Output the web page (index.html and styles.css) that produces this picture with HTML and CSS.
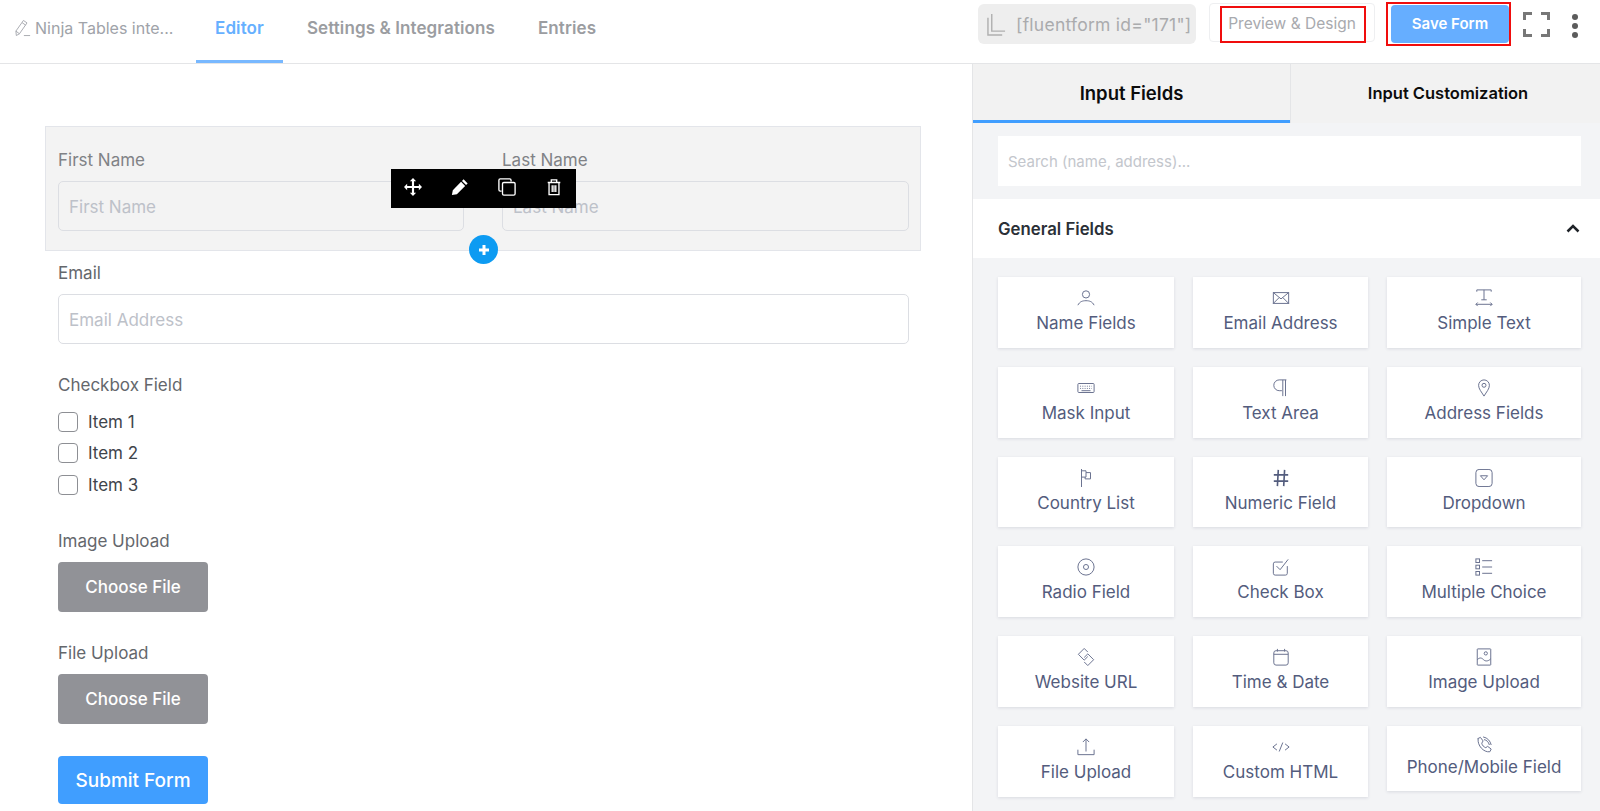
FILE: index.html
```html
<!DOCTYPE html>
<html lang="en">
<head>
<meta charset="utf-8">
<title>Fluent Forms Editor</title>
<link rel="stylesheet" href="styles.css">
</head>
<body>
<div class="app">
  <header class="topbar">
    <div class="title">
      <svg class="title-icon" viewBox="0 0 18 20"><path d="M1.500 18.500L1 13.500 9.500 1.500l4 2.800L5 16.500zM1 13.500l4 3M8 4l4 2.800M10 18.500h7"/></svg>
      <span>Ninja Tables inte...</span>
    </div>
    <nav class="nav">
      <a class="nav-item active">Editor</a>
      <a class="nav-item">Settings &amp; Integrations</a>
      <a class="nav-item">Entries</a>
    </nav>
    <div class="actions">
      <div class="shortcode">
        <svg class="copy-icon" viewBox="0 0 20 24"><path d="M1 5v18h15M5 1v18h14"/></svg>
        <span>[fluentform id="171"]</span>
      </div>
      <button class="btn-preview">Preview &amp; Design<span class="mark mark-preview"></span></button>
      <button class="btn-save">Save Form<span class="mark mark-save"></span></button>
      <svg class="full-icon" viewBox="0 0 27 25"><path d="M1.500 8V1.500H9M18 1.500h7.500V8M1.500 17v6.500H9M18 23.500h7.500V17"/></svg>
      <div class="dots"><i></i><i></i><i></i></div>
    </div>
  </header>

  <div class="main">
    <section class="canvas">
      <div class="row-selected">
        <div class="field half">
          <label class="lbl">First Name</label>
          <input class="inp" placeholder="First Name">
        </div>
        <div class="field half">
          <label class="lbl">Last Name</label>
          <input class="inp" placeholder="Last Name">
        </div>
        <div class="toolbar">
          <svg viewBox="0 0 20 20"><path class="solid" d="M10 0l3.500 3.500h-2.300v5.300h5.300V6.500L20 10l-3.500 3.500v-2.300h-5.300v5.300h2.300L10 20l-3.500-3.500h2.300v-5.300H3.500v2.300L0 10l3.500-3.500v2.300h5.300V3.500H6.500z"/></svg>
          <svg viewBox="0 0 20 20"><path class="solid" d="M14 1.500l4.500 4.500-1.800 1.800-4.500-4.500zM11.200 4.300l4.500 4.500L6.500 18 1 19l1-5.500z"/></svg>
          <svg viewBox="0 0 20 20"><path class="line" d="M4 14.500H2.500a1.500 1.500 0 0 1-1.500-1.500V2.500A1.500 1.500 0 0 1 2.500 1H13a1.500 1.500 0 0 1 1.500 1.500V4"/><rect class="line" x="5" y="5" width="14" height="14" rx="1.500"/></svg>
          <svg viewBox="0 0 20 20"><path class="line" d="M3 5h14M7 5V2h6v3M4.500 5v13.500h11V5M8 8v7.500M10 8v7.500M12 8v7.500"/></svg>
        </div>
        <div class="plus"><svg viewBox="0 0 12 12"><path d="M6 1v10M1 6h10"/></svg></div>
      </div>

      <div class="block first">
        <label class="lbl">Email</label>
        <input class="inp white" placeholder="Email Address">
      </div>

      <div class="block gap-check">
        <label class="lbl">Checkbox Field</label>
        <div class="checks">
          <div class="check"><span class="box"></span>Item 1</div>
          <div class="check"><span class="box"></span>Item 2</div>
          <div class="check"><span class="box"></span>Item 3</div>
        </div>
      </div>

      <div class="block gap-upload">
        <label class="lbl">Image Upload</label>
        <button class="btn-file">Choose File</button>
      </div>

      <div class="block gap-upload2">
        <label class="lbl">File Upload</label>
        <button class="btn-file">Choose File</button>
      </div>

      <div class="block gap-submit">
        <button class="btn-submit">Submit Form</button>
      </div>
    </section>

    <aside class="side">
      <div class="tabs">
        <div class="tab current">Input Fields</div>
        <div class="tab other">Input Customization</div>
      </div>
      <div class="search-wrap"><input class="search" placeholder="Search (name, address)..."></div>
      <div class="group-head">
        <span>General Fields</span>
        <svg class="chev" viewBox="0 0 14 9"><path d="M1.500 7.500L7 2l5.500 5.500"/></svg>
      </div>
      <div class="grid">
        <div class="card"><svg class="ico" viewBox="0 0 20 20"><circle cx="10" cy="6" r="4"/><path d="M1 18c2-4 5-5 9-5s7 1 9 5"/></svg><span>Name Fields</span></div>
        <div class="card"><svg class="ico" viewBox="0 0 20 20"><rect x="1.500" y="4" width="17" height="12"/><path d="M1.500 4L10 11l8.500-7M1.500 16L8 9.500M18.500 16L12 9.500"/></svg><span>Email Address</span></div>
        <div class="card"><svg class="ico" viewBox="0 0 20 20"><path d="M2 3V1h16v2M10 1v11M7 12h6M1 17h18M3 15l-2 2 2 2M17 15l2 2-2 2"/></svg><span>Simple Text</span></div>

        <div class="card"><svg class="ico" viewBox="0 0 20 20"><rect x="1" y="5" width="18" height="10" rx="1"/><path class="dash" d="M3.500 8h13M3.500 10.500h13"/><path d="M5 13h10"/></svg><span>Mask Input</span></div>
        <div class="card"><svg class="ico" viewBox="0 0 20 20"><path d="M16 1H8a6 6 0 0 0 0 12h3M12 1v18M15 1v18"/></svg><span>Text Area</span></div>
        <div class="card"><svg class="ico" viewBox="0 0 20 20"><path d="M10 19C7 14 4 11 4 7a6 6 0 0 1 12 0c0 4-3 7-6 12z"/><circle cx="10" cy="7" r="2.200"/></svg><span>Address Fields</span></div>

        <div class="card"><svg class="ico" viewBox="0 0 20 20"><path d="M5 0v20M5 2h5v2h5v7H9V9H5M10 4v5h-1"/></svg><span>Country List</span></div>
        <div class="card"><svg class="ico heavy" viewBox="0 0 20 20"><path d="M7 1L6 19M14 1l-1 18M2 6.500h16M2 13.500h16"/></svg><span>Numeric Field</span></div>
        <div class="card"><svg class="ico" viewBox="0 0 20 20"><rect x="1" y="0.500" width="18" height="19" rx="3.500"/><path d="M6 7.500h8L10 12z"/></svg><span>Dropdown</span></div>

        <div class="card"><svg class="ico" viewBox="0 0 20 20"><circle cx="10" cy="10" r="9"/><circle cx="10" cy="10" r="2.800"/></svg><span>Radio Field</span></div>
        <div class="card"><svg class="ico" viewBox="0 0 20 20"><path d="M17 9v8a2 2 0 0 1-2 2H3.500a2 2 0 0 1-2-2V6.500a2 2 0 0 1 2-2H12M5 9l4 4 9-11.500"/></svg><span>Check Box</span></div>
        <div class="card"><svg class="ico" viewBox="0 0 20 20"><rect x="1" y="1" width="4" height="4"/><rect x="1" y="8" width="4" height="4"/><rect x="1" y="15" width="4" height="4"/><path d="M8 3h11M8 10h11M8 17h11"/></svg><span>Multiple Choice</span></div>

        <div class="card"><svg class="ico" viewBox="0 0 20 20"><path d="M12 4.500L8 0.500 1.500 7l6.500 6.500 4-4M8 15.500l4 4L18.500 13 12 6.500l-4 4"/></svg><span>Website URL</span></div>
        <div class="card"><svg class="ico" viewBox="0 0 20 20"><rect x="2" y="3" width="16" height="16" rx="2.500"/><path d="M2 7h16M6 1v3M14 1v3"/></svg><span>Time &amp; Date</span></div>
        <div class="card"><svg class="ico" viewBox="0 0 20 20"><rect x="2.500" y="1" width="15" height="18" rx="0.500"/><circle cx="12" cy="6" r="1.800"/><path d="M2.500 13c3-3 5-2 7 0s5 2 8-1"/></svg><span>Image Upload</span></div>

        <div class="card"><svg class="ico" viewBox="0 0 20 20"><path d="M1 13v5.500h18V13M10 15V1M6.500 4.500L10 1l3.500 3.500"/></svg><span>File Upload</span></div>
        <div class="card"><svg class="ico" viewBox="0 0 20 20"><path d="M5.500 6.500L1 10l4.500 3.500M14.500 6.500L19 10l-4.500 3.500M12 5L8 15"/></svg><span>Custom HTML</span></div>
        <div class="card short"><svg class="ico" viewBox="0 0 20 20"><path d="M3 3l3-1.500 3 4L7.500 8c.500 2.500 2 4 4.500 5l2-1.500 4 3-1.500 3c-7 1-14-7-13-14.500zM9 1c5 1 8 4.500 9 9M10 4c3 .5 5 2.500 6 6"/></svg><span>Phone/Mobile Field</span></div>
      </div>
    </aside>
  </div>
</div>
</body>
</html>
```

FILE: styles.css
```css
* { box-sizing: border-box; }
html, body { margin: 0; height: 100%; overflow: hidden; background: #fff; }
body { font-family: Inter, "Noto Sans", sans-serif; color: #4b5563; }
button, input { font-family: inherit; }

.app { display: flex; flex-direction: column; height: 811px; }

/* Top bar */
.topbar {
  height: 64px;
  flex: none;
  display: flex;
  border-bottom: 1px solid #e4e5e7;
  position: relative;
}
.title {
  display: flex;
  align-items: center;
  gap: 4px;
  padding: 0 0 8px 15px;
  width: 196px;
  font-size: 16px;
  color: #a0a3a9;
  white-space: nowrap;
}
.title-icon { width: 16px; height: 18px; flex: none; fill: none; stroke: #a0a3a9; stroke-width: 1; }
.nav { display: flex; }
.nav-item {
  height: 63px;
  padding: 0 19px;
  margin-right: 5px;
  display: flex;
  align-items: center;
  padding-bottom: 7px;
  font-size: 17px;
  letter-spacing: 0.1px;
  font-weight: 600;
  color: #9b9da1;
}
.nav-item.active {
  color: #66b0ff;
  box-shadow: inset 0 -3px 0 #78b8ff;
}
.actions {
  margin-left: auto;
  display: flex;
  align-items: flex-start;
  height: 63px;
}
.shortcode {
  margin: 4px 13px 0 0;
  width: 218px;
  height: 40px;
  display: flex;
  align-items: center;
  gap: 10px;
  padding: 1px 0 0 9px;
  background: #eeeeee;
  border-radius: 6px;
  font-size: 17.500px;
  letter-spacing: 0.25px;
  color: #aaabad;
  white-space: nowrap;
}
.copy-icon { width: 19px; height: 23px; flex: none; fill: none; stroke: #b0b0b0; stroke-width: 1.500; }
.btn-preview {
  position: relative;
  margin-top: 3px;
  width: 166px;
  height: 39px;
  background: #fff;
  border: 1px solid #eeeff1;
  border-radius: 4px;
  font-size: 15.500px;
  color: #a8aaae;
  padding: 1px 0 0;
  white-space: nowrap;
}
.btn-save {
  position: relative;
  margin: 5px 0 0 16px;
  width: 118px;
  height: 38px;
  padding: 0 0 2px;
  background: #66aeff;
  border: 0;
  border-radius: 4px;
  color: #fff;
  font-size: 15px;
  font-weight: 600;
}
.mark { position: absolute; border: 2px solid #f00d0d; pointer-events: none; }
.mark-preview { left: 10px; top: 2px; width: 146px; height: 37px; }
.mark-save { left: -5px; top: -3px; width: 125px; height: 44px; }
.full-icon {
  margin: 12px 0 0 14px;
  width: 27px;
  height: 25px;
  flex: none;
  fill: none;
  stroke: #777;
  stroke-width: 3;
}
.dots {
  margin: 14px 22px 0 22px;
  width: 6px;
  display: flex;
  flex-direction: column;
  gap: 3px;
}
.dots i { display: block; width: 6px; height: 6px; border-radius: 50%; background: #5c5c5c; }

/* Main */
.main { flex: 1; display: flex; min-height: 0; }

/* Form canvas */
.canvas { width: 972px; flex: none; padding: 62px 0 0 45px; }
.row-selected {
  position: relative;
  width: 876px;
  height: 125px;
  padding: 22px 11px 0 12px;
  display: flex;
  gap: 38px;
  background: #f3f3f3;
  border: 1px solid #e3e5ea;
}
.half { flex: 1; }
.half:first-child { flex: none; width: 406px; }
.lbl {
  display: block;
  height: 22px;
  line-height: 22px;
  margin-bottom: 10px;
  font-size: 17px;
  color: #64676c;
}
.row-selected .lbl { color: #808286; margin-bottom: 10px; }
.inp {
  display: block;
  width: 100%;
  height: 50px;
  padding: 2px 10px 0;
  background: #f3f3f3;
  border: 1px solid #dcdee3;
  border-radius: 5px;
  font-size: 17px;
}
.inp.white { background: #fff; }
.inp::placeholder { color: #bdc1c9; opacity: 1; }
.toolbar {
  position: absolute;
  left: 345px;
  top: 42px;
  width: 185px;
  height: 39px;
  background: #000;
  display: flex;
  align-items: center;
  gap: 29px;
  padding: 0 0 3px 13px;
}
.toolbar svg { width: 18px; height: 18px; flex: none; }
.toolbar .solid { fill: #fff; }
.toolbar .line { fill: none; stroke: #fff; stroke-width: 1.500; }
.plus {
  position: absolute;
  left: 423px;
  top: 108px;
  width: 29px;
  height: 29px;
  border-radius: 50%;
  background: #0d9bf2;
  display: flex;
  align-items: center;
  justify-content: center;
}
.plus svg { width: 12px; height: 12px; fill: none; stroke: #fff; stroke-width: 3; }

.block { width: 877px; padding: 0 13px; }
.first { margin-top: 11px; }
.gap-check { margin-top: 30px; }
.gap-upload { margin-top: 29.500px; }
.gap-upload2 { margin-top: 30px; }
.gap-submit { margin-top: 32px; }
.checks { display: flex; flex-direction: column; }
.check {
  display: flex;
  align-items: center;
  gap: 10px;
  height: 31.500px;
  font-size: 17px;
  color: #3f444b;
}
.box {
  width: 20px;
  height: 20px;
  border: 1px solid #8d8f94;
  border-radius: 4px;
  background: #fff;
}
.btn-file {
  display: block;
  width: 150px;
  height: 50px;
  border: 0;
  border-radius: 4px;
  background: #919297;
  color: #fff;
  font-size: 17px;
  font-weight: 500;
}
.btn-submit {
  display: block;
  width: 150px;
  height: 48px;
  border: 0;
  border-radius: 4px;
  background: #409eff;
  color: #fff;
  font-size: 19px;
  font-weight: 500;
}

/* Sidebar */
.side {
  flex: 1;
  min-width: 0;
  background: #f3f4f6;
  border-left: 1px solid #e4e5e7;
}
.tabs { display: flex; height: 59px; }
.tab {
  display: flex;
  align-items: center;
  justify-content: center;
  padding-bottom: 2px;
  background: #f2f2f2;
  color: #0c0c0c;
  font-weight: 600;
}
.tab.current {
  width: 318px;
  font-size: 18.500px;
  border-right: 1px solid #e4e5e7;
  box-shadow: inset 0 -3px 0 #409eff;
}
.tab.other { flex: 1; font-size: 16.500px; padding-left: 5px; }
.search-wrap { padding: 13px 19px 13px 25px; }
.search {
  display: block;
  width: 100%;
  height: 50px;
  padding: 0 10px;
  border: 0;
  background: #fff;
  font-size: 15px;
}
.search::placeholder { color: #c3c6cc; opacity: 1; }
.group-head {
  height: 59px;
  padding: 0 20px 0 25px;
  background: #fff;
  display: flex;
  align-items: center;
  justify-content: space-between;
  font-size: 16.800px;
  font-weight: 600;
  color: #2b3037;
}
.chev { width: 14px; height: 9px; fill: none; stroke: #1f2328; stroke-width: 2.500; }
.grid {
  margin: 19px 0 0 25px;
  display: grid;
  grid-template-columns: 176px 175px 194px;
  grid-auto-rows: 70.800px;
  gap: 19px;
}
.card {
  background: #fff;
  box-shadow: 0 1px 3px rgba(30, 40, 70, 0.12);
  display: flex;
  flex-direction: column;
  align-items: center;
  padding-top: 12px;
  font-size: 17px;
  line-height: 22px;
  color: #535c7d;
  white-space: nowrap;
}
.card.short { height: 65px; padding-top: 10px; }
.card.short span { margin-top: -3px; }
.ico {
  width: 18px;
  height: 18px;
  margin-bottom: 5px;
  flex: none;
  fill: none;
  stroke: #6a7290;
  stroke-width: 1.100;
}
.ico.heavy { stroke: #535c7d; stroke-width: 1.800; }
.ico .dash { stroke-dasharray: 1 1.500; }
```
